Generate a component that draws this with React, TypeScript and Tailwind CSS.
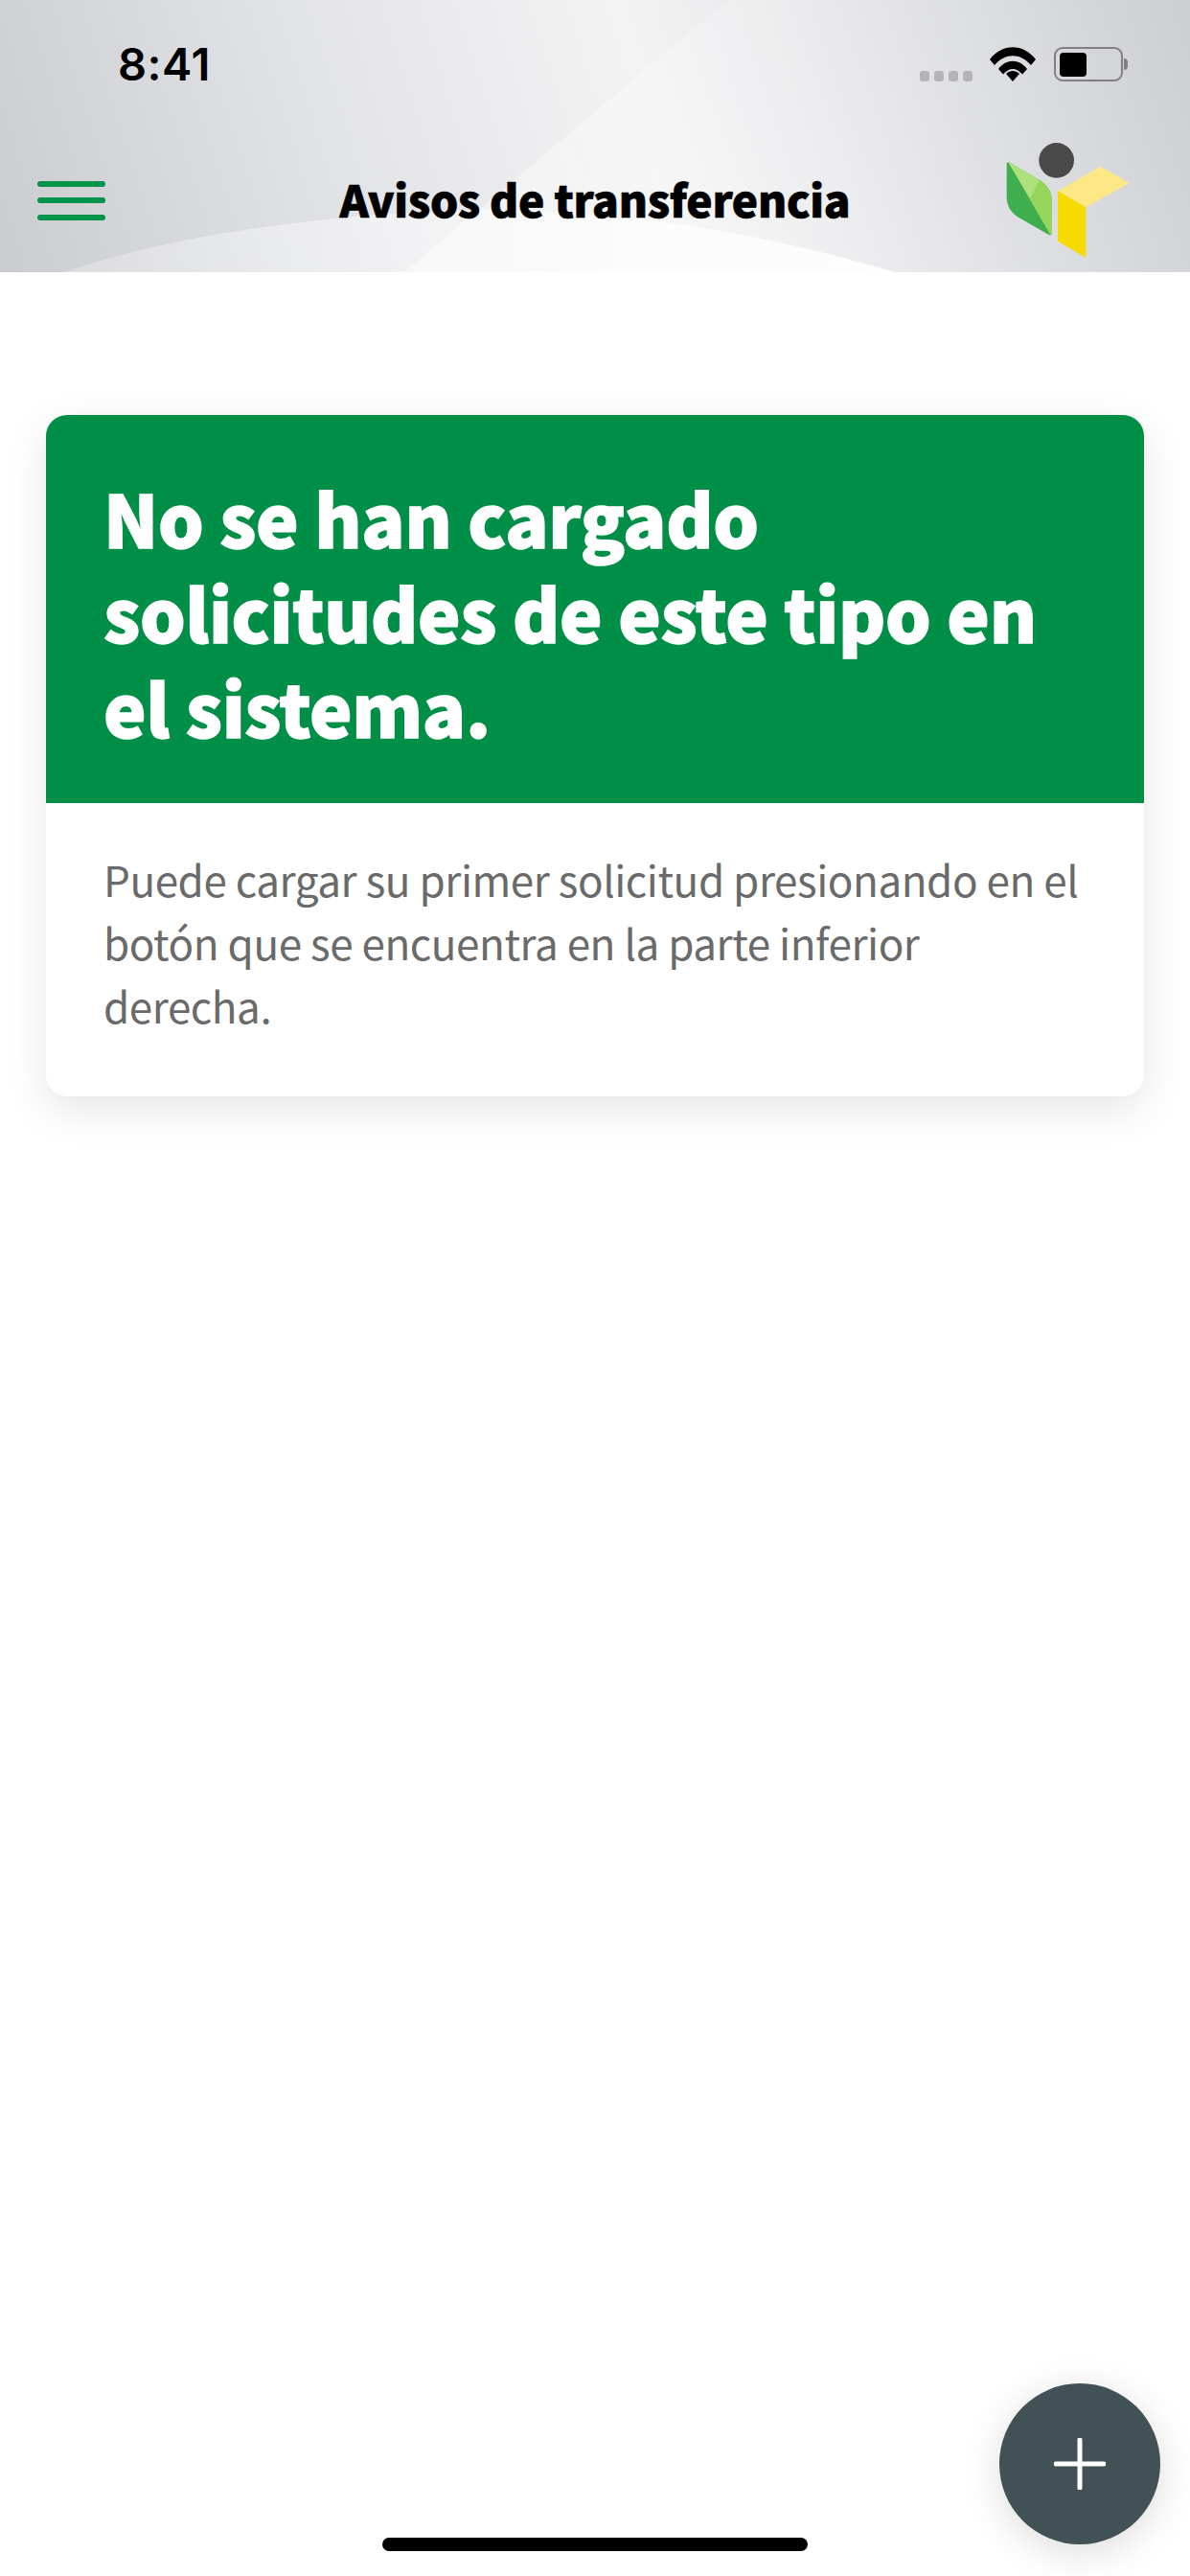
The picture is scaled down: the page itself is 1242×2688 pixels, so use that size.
export default function App() {
  return (
    <div className="relative h-[2688px] w-[1242px] overflow-hidden bg-white font-['Noto_Sans_CJK_JP','Noto_Sans',sans-serif]">
      <header className="relative h-[284px] overflow-hidden bg-[linear-gradient(72deg,#cbccd0_0%,#e3e4e7_30%,#f3f3f4_55%,#dedfe3_82%,#cdced2_100%)]">
        <svg className="absolute inset-0" width="1242" height="284" viewBox="0 0 1242 284">
          <defs>
            <linearGradient id="sheen" gradientUnits="userSpaceOnUse" x1="67" y1="0" x2="934" y2="0">
              <stop offset="0" stopColor="#ffffff" stopOpacity="0.25" />
              <stop offset="0.55" stopColor="#ffffff" stopOpacity="0.55" />
              <stop offset="1" stopColor="#ffffff" stopOpacity="0.95" />
            </linearGradient>
            <linearGradient id="ray" gradientUnits="userSpaceOnUse" x1="422" y1="284" x2="980" y2="40">
              <stop offset="0" stopColor="#ffffff" stopOpacity="0.5" />
              <stop offset="0.45" stopColor="#ffffff" stopOpacity="0.3" />
              <stop offset="1" stopColor="#ffffff" stopOpacity="0" />
            </linearGradient>
          </defs>
          <path d="M422 284 L760 0 L1242 0 L1242 284 Z" fill="url(#ray)" />
          <path d="M67 284 C 180 245 340 222 520 218 C 680 222 820 250 934 284 Z" fill="url(#sheen)" />
        </svg>

        <div className="relative flex h-[134px] items-start justify-between pl-[123px] pr-[65px] pt-[34px]">
          <span className="font-['Inter',sans-serif] text-[47px] font-semibold leading-[66px] tracking-[0.5px] text-black">8:41</span>
          <div className="mt-[15px] flex items-end">
            <div className="flex gap-[5px]">
              <span className="h-[11px] w-[10px] rounded-[3px] bg-[#b4b4b8]" />
              <span className="h-[11px] w-[10px] rounded-[3px] bg-[#b4b4b8]" />
              <span className="h-[11px] w-[10px] rounded-[3px] bg-[#b4b4b8]" />
              <span className="h-[11px] w-[10px] rounded-[3px] bg-[#b4b4b8]" />
            </div>
            <svg className="ml-[18px]" width="48" height="36" viewBox="0 0 48 36">
              <path d="M0 13 C 13 -4 35 -4 48 13 L 43 19 C 32 6 16 6 5 19 Z" fill="#000" />
              <path d="M9 23 C 17 12 31 12 39 23 L 34 28.5 C 28 21 20 21 14 28.5 Z" fill="#000" />
              <path d="M24 36 L 17 28 C 21 24 27 24 31 28 Z" fill="#000" />
            </svg>
            <div className="ml-[19px] flex items-center">
              <div className="flex h-[36px] w-[72px] items-stretch rounded-[9px] border-[2.5px] border-[#808084] p-[3.5px]">
                <div className="w-[28px] rounded-[4px] bg-black" />
              </div>
              <div className="ml-[1px] h-[12px] w-[4px] rounded-r-full bg-[#808084]" />
            </div>
          </div>
        </div>

        <div className="relative grid h-[150px] grid-cols-[1fr_auto_1fr] items-center px-[39px]">
          <div className="flex w-[71px] flex-col gap-[11.5px]">
            <span className="h-[6px] rounded-full bg-[#01944a]" />
            <span className="h-[6px] rounded-full bg-[#01944a]" />
            <span className="h-[6px] rounded-full bg-[#01944a]" />
          </div>
          <h1 className="mb-[4px] text-[46px] font-black leading-[60px] tracking-[-0.3px] text-black [-webkit-text-stroke:0.7px_#000]">Avisos de transferencia</h1>
          <div className="flex justify-end pr-[25px]">
            <svg width="128.3" height="120" viewBox="150 54 385 360">
              <circle cx="308" cy="109" r="55" fill="#4a4a4a" />
              <path d="M152 122 Q152 112 162 116 L250 168 Q294 192 294 240 L294 335 Q292 346 284 342 L190 288 Q152 266 152 222 Z" fill="#3fae4f" />
              <path d="M157 115 L162 116 L250 168 Q294 192 294 240 L294 335 L290 344 Z" fill="#97d65c" />
              <path d="M157 115 L162 116 L250 168 Q252 169 254 170 L226 228 Z" fill="#aee07c" />
              <path d="M312 205 L446 128 L535 180 L400 256 Z" fill="#fee886" />
              <path d="M312 205 L400 256 L400 414 L312 362 Z" fill="#f7da00" />
            </svg>
          </div>
        </div>
      </header>

      <main className="px-[48px] pt-[149px]">
        <section className="overflow-hidden rounded-[22px] bg-white shadow-[0_14px_44px_rgba(0,0,0,0.1)]">
          <div className="bg-[#018f48] pb-[51px] pl-[60px] pr-[40px] pt-[57px]">
            <h2 className="text-[75px] font-black leading-[99px] tracking-[-0.35px] text-white [-webkit-text-stroke:1.4px_#fff]">
              No se han cargado solicitudes de este tipo en el sistema.
            </h2>
          </div>
          <div className="pb-[62px] pl-[60px] pr-[66px] pt-[46px]">
            <p className="text-[44px] font-normal leading-[66px] tracking-[-0.45px] text-[#6a6a6a]">
              Puede cargar su primer solicitud presionando en el botón que se encuentra en la parte inferior derecha.
            </p>
          </div>
        </section>
      </main>

      <button className="absolute bottom-[33px] right-[31px] flex h-[168px] w-[168px] items-center justify-center rounded-full bg-[#415155] shadow-[0_8px_40px_rgba(0,0,0,0.14)]">
        <svg width="54" height="54" viewBox="0 0 54 54">
          <path d="M27 2 V52 M2 27 H52" stroke="#fff" strokeWidth="5" strokeLinecap="round" />
        </svg>
      </button>

      <div className="absolute bottom-[26px] left-[399px] h-[14px] w-[444px] rounded-full bg-black" />
    </div>
  );
}
